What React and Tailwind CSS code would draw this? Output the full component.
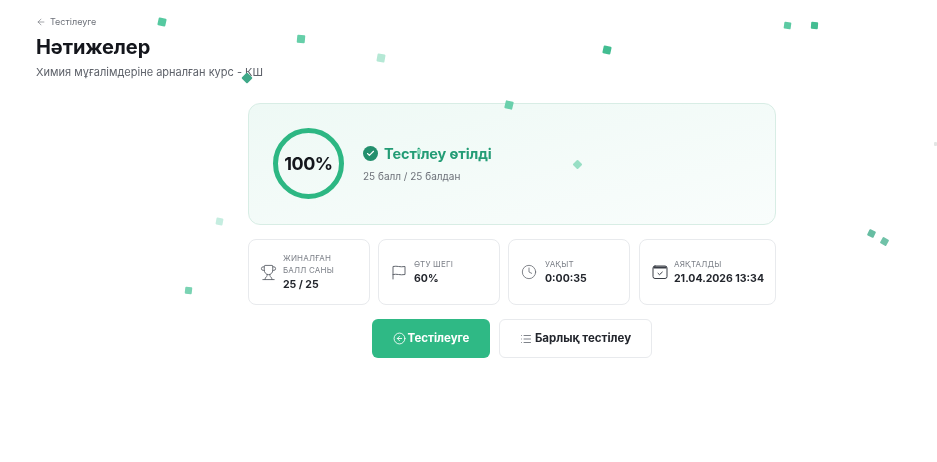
import { ArrowLeft, Trophy, Clock, CircleArrowLeft, List, Check } from 'lucide-react'

function FlagIcon() {
  return (
    <svg width="16" height="16" viewBox="0 0 16 16" fill="none" stroke="currentColor" strokeWidth="1" strokeLinecap="round" strokeLinejoin="round" className="shrink-0 text-[#63676f]">
      <path d="M2 15V2.5c4-1 7 1 12 0v8c-5 1-8-1-12 0" />
    </svg>
  )
}

function CalendarIcon() {
  return (
    <svg width="16" height="16" viewBox="0 0 16 16" fill="none" stroke="currentColor" strokeLinecap="round" strokeLinejoin="round" className="shrink-0 text-[#3a3e46]">
      <rect x="1" y="2" width="14" height="12.5" rx="2" strokeWidth="1" />
      <path d="M1.5 3.5h13" strokeWidth="2" strokeLinecap="butt" />
      <path d="M6 9.3l1.5 1.4 2.8-2.6" strokeWidth="1" />
    </svg>
  )
}

const stats = [
  { icon: <Trophy size={17} strokeWidth={1.25} className="shrink-0 text-[#5b5f67]" />, card: 'gap-[6px] pl-[11px]', label: ['ЖИНАЛҒАН', 'БАЛЛ САНЫ'], value: '25 / 25' },
  { icon: <FlagIcon />, card: 'gap-[7px] pl-[12px]', label: ['ӨТУ ШЕГІ'], value: '60%' },
  { icon: <Clock size={16} strokeWidth={1.2} className="shrink-0 text-[#63676f]" />, card: 'gap-[8px] pl-[12px]', label: ['УАҚЫТ'], value: '0:00:35' },
  { icon: <CalendarIcon />, card: 'ml-px gap-[6px] pl-[12px]', label: ['АЯҚТАЛДЫ'], value: '21.04.2026 13:34' },
]

const confetti = [
  'left-[158px] top-[18px] h-[8px] w-[8px] rotate-[12deg] bg-[#55c9a0]',
  'left-[297px] top-[35px] h-[8px] w-[8px] rotate-[5deg] bg-[#66cfa9]',
  'left-[377px] top-[54px] h-[8px] w-[8px] rotate-[10deg] bg-[#b5e8d5]',
  'left-[243px] top-[74px] h-[8px] w-[8px] rotate-45 bg-[#3fa888]',
  'left-[603px] top-[46px] h-[8px] w-[8px] rotate-[12deg] bg-[#42bd91]',
  'left-[505px] top-[101px] h-[8px] w-[8px] rotate-[14deg] bg-[#6ad0ac]',
  'left-[784px] top-[22px] h-[7px] w-[7px] rotate-[8deg] bg-[#5ccaa3]',
  'left-[811px] top-[22px] h-[7px] w-[7px] rotate-[4deg] bg-[#44bd92]',
  'left-[574px] top-[161px] h-[7px] w-[7px] rotate-45 bg-[#98dfc5]',
  'left-[216px] top-[218px] h-[7px] w-[7px] rotate-[10deg] bg-[#c5ede0]',
  'left-[185px] top-[287px] h-[7px] w-[7px] rotate-[6deg] bg-[#7ad3b3]',
  'left-[868px] top-[230px] h-[7px] w-[7px] rotate-[25deg] bg-[#66bda2]',
  'left-[881px] top-[238px] h-[7px] w-[7px] rotate-[30deg] bg-[#70c2a8]',
  'left-[417px] top-[149px] h-[5px] w-[4px] rotate-[5deg] bg-[#8fdcc0]',
  'left-[934px] top-[142px] h-[4px] w-[3px] bg-[#e3e6e5]',
]

export default function App() {
  return (
    <div className="relative h-[462px] w-[937px] overflow-hidden bg-white font-['Inter',sans-serif] text-[#14161c] blur-[0.4px]">
      <header className="px-9 pt-[16px]">
        <div className="flex h-3 items-center gap-1 text-[9px] text-[#6d7179]">
          <ArrowLeft size={10} strokeWidth={1.5} />
          <span>Тестілеуге</span>
        </div>
        <h1 className="mt-[5px] text-[20px] font-bold leading-7 tracking-[-0.1px]">Нәтижелер</h1>
        <p className="mt-[3px] text-[11px] leading-4 text-[#5e626a]">Химия мұғалімдеріне арналған курс - КШ</p>
      </header>

      <main className="ml-[248px] mt-[23px] w-[528px]">
        <section className="flex h-[122px] items-center rounded-xl border border-[#d8ede5] bg-gradient-to-br from-[#eef9f5] to-[#f9fdfc] pb-[2px] pl-[24px]">
          <div className="flex h-[71px] w-[71px] items-center justify-center rounded-full border-[5px] border-[#2db783] text-[18px] font-bold tracking-[-0.5px]">
            100%
          </div>
          <div className="ml-[19px]">
            <div className="flex items-center gap-[6px]">
              <span className="flex h-[15px] w-[15px] items-center justify-center rounded-full bg-[#238f6d]">
                <Check size={9} strokeWidth={3} className="text-white" />
              </span>
              <span className="text-[14.5px] font-bold leading-5 tracking-[-0.1px] text-[#239c75]">Тестілеу өтілді</span>
            </div>
            <p className="mt-[5px] text-[10px] leading-[14px] text-[#6d7179]">25 балл / 25 балдан</p>
          </div>
        </section>

        <section className="mt-[14px] grid grid-cols-[122px_122px_122px_138px] gap-2">
          {stats.map(({ icon, card, label, value }) => (
            <div key={value} className={`flex h-[66px] items-center rounded-lg border border-[#e8eaed] bg-white ${card}`}>
              {icon}
              <div>
                <div className="text-[8px] leading-[12px] tracking-[0.2px] text-[#7d8189]">
                  {label.map((line) => (
                    <div key={line}>{line}</div>
                  ))}
                </div>
                <div className="mt-[2px] whitespace-nowrap text-[10.5px] font-bold leading-[14px] text-[#23262d]">{value}</div>
              </div>
            </div>
          ))}
        </section>

        <div className="mt-[14px] flex justify-center gap-[9px]">
          <button className="flex h-[39px] w-[118px] items-center justify-center gap-[2px] rounded-md bg-[#2fb985] text-[11.5px] font-bold text-white">
            <CircleArrowLeft size={13} strokeWidth={1.6} />
            Тестілеуге
          </button>
          <button className="flex h-[39px] w-[153px] items-center justify-center gap-[3px] rounded-md border border-[#e8eaed] bg-white text-[11.5px] font-bold text-[#23262d]">
            <List size={12} strokeWidth={1.75} className="text-[#6d7179]" />
            Барлық тестілеу
          </button>
        </div>
      </main>

      {confetti.map((cls) => (
        <span key={cls} className={`absolute rounded-[1px] ${cls}`} />
      ))}
    </div>
  )
}
